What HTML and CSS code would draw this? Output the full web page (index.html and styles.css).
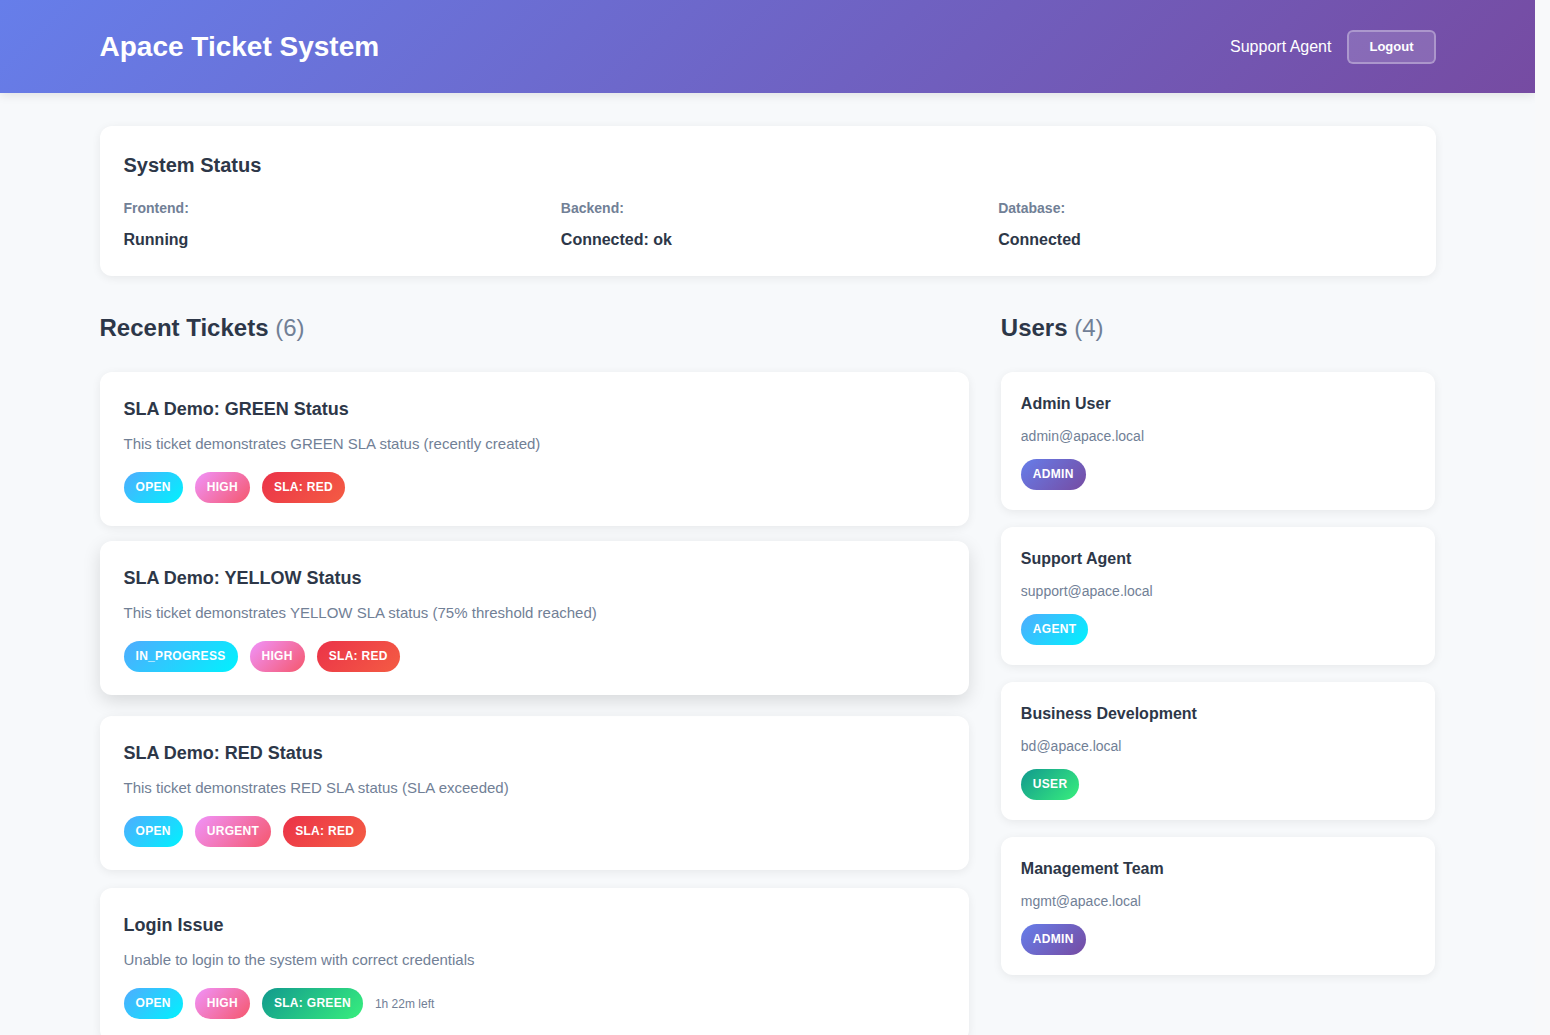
FILE: index.html
```html
<!DOCTYPE html>
<html lang="en">
<head>
<meta charset="utf-8">
<title>Apace Ticket System</title>
<link rel="stylesheet" href="styles.css">
</head>
<body>
<header class="topbar">
  <div class="topbar-inner">
    <h1 class="brand">Apace Ticket System</h1>
    <div class="user-area">
      <span class="current-user">Support Agent</span>
      <button class="logout-btn" type="button">Logout</button>
    </div>
  </div>
</header>

<main class="container">
  <section class="status-card">
    <h2 class="status-title">System Status</h2>
    <div class="status-grid">
      <div class="status-item">
        <div class="status-label">Frontend:</div>
        <div class="status-value">Running</div>
      </div>
      <div class="status-item">
        <div class="status-label">Backend:</div>
        <div class="status-value">Connected: ok</div>
      </div>
      <div class="status-item">
        <div class="status-label">Database:</div>
        <div class="status-value">Connected</div>
      </div>
    </div>
  </section>

  <div class="content-grid">
    <section class="tickets">
      <h2 class="section-title">Recent Tickets <span class="count">(6)</span></h2>

      <article class="ticket-card">
        <h3 class="ticket-title">SLA Demo: GREEN Status</h3>
        <p class="ticket-desc">This ticket demonstrates GREEN SLA status (recently created)</p>
        <div class="badges">
          <span class="badge badge-open">OPEN</span>
          <span class="badge badge-priority">HIGH</span>
          <span class="badge badge-sla-red">SLA: RED</span>
        </div>
      </article>

      <article class="ticket-card ticket-card-raised">
        <h3 class="ticket-title">SLA Demo: YELLOW Status</h3>
        <p class="ticket-desc">This ticket demonstrates YELLOW SLA status (75% threshold reached)</p>
        <div class="badges">
          <span class="badge badge-open">IN_PROGRESS</span>
          <span class="badge badge-priority">HIGH</span>
          <span class="badge badge-sla-red">SLA: RED</span>
        </div>
      </article>

      <article class="ticket-card">
        <h3 class="ticket-title">SLA Demo: RED Status</h3>
        <p class="ticket-desc">This ticket demonstrates RED SLA status (SLA exceeded)</p>
        <div class="badges">
          <span class="badge badge-open">OPEN</span>
          <span class="badge badge-priority">URGENT</span>
          <span class="badge badge-sla-red">SLA: RED</span>
        </div>
      </article>

      <article class="ticket-card">
        <h3 class="ticket-title">Login Issue</h3>
        <p class="ticket-desc">Unable to login to the system with correct credentials</p>
        <div class="badges">
          <span class="badge badge-open">OPEN</span>
          <span class="badge badge-priority">HIGH</span>
          <span class="badge badge-sla-green">SLA: GREEN</span>
          <span class="time-left">1h 22m left</span>
        </div>
      </article>

      <article class="ticket-card">
        <h3 class="ticket-title">Password Reset Request</h3>
        <p class="ticket-desc">User requests a password reset for their account</p>
        <div class="badges">
          <span class="badge badge-open">OPEN</span>
          <span class="badge badge-priority">MEDIUM</span>
          <span class="badge badge-sla-green">SLA: GREEN</span>
          <span class="time-left">3h 10m left</span>
        </div>
      </article>

      <article class="ticket-card">
        <h3 class="ticket-title">Report Export Failing</h3>
        <p class="ticket-desc">Exporting monthly reports to PDF returns an error</p>
        <div class="badges">
          <span class="badge badge-open">OPEN</span>
          <span class="badge badge-priority">LOW</span>
          <span class="badge badge-sla-green">SLA: GREEN</span>
          <span class="time-left">6h 45m left</span>
        </div>
      </article>
    </section>

    <aside class="users">
      <h2 class="section-title">Users <span class="count">(4)</span></h2>

      <div class="user-card">
        <h3 class="user-name">Admin User</h3>
        <p class="user-email">admin@apace.local</p>
        <span class="badge badge-admin">ADMIN</span>
      </div>

      <div class="user-card">
        <h3 class="user-name">Support Agent</h3>
        <p class="user-email">support@apace.local</p>
        <span class="badge badge-open">AGENT</span>
      </div>

      <div class="user-card">
        <h3 class="user-name">Business Development</h3>
        <p class="user-email">bd@apace.local</p>
        <span class="badge badge-sla-green">USER</span>
      </div>

      <div class="user-card">
        <h3 class="user-name">Management Team</h3>
        <p class="user-email">mgmt@apace.local</p>
        <span class="badge badge-admin">ADMIN</span>
      </div>
    </aside>
  </div>
</main>
</body>
</html>
```

FILE: styles.css
```css
* {
  box-sizing: border-box;
}

html, body {
  margin: 0;
  padding: 0;
}

html {
  background: #f8f9fa;
}

body {
  font-family: "Liberation Sans", Arial, Helvetica, sans-serif;
  background: #f7f9fb;
  color: #2d3748;
  margin-right: 15px;
}

/* Header */
.topbar {
  background: linear-gradient(135deg, #667eea 0%, #764ba2 100%);
  box-shadow: 0 2px 10px rgba(0, 0, 0, 0.1);
  color: #ffffff;
}

.topbar-inner {
  max-width: 1400px;
  margin: 0 auto;
  padding: 28px 32px;
  display: flex;
  align-items: center;
  justify-content: space-between;
}

.brand {
  margin: 0;
  font-size: 28px;
  line-height: 37px;
  font-weight: 700;
}

.user-area {
  display: flex;
  align-items: center;
  gap: 16px;
}

.current-user {
  font-size: 16px;
}

.logout-btn {
  font-family: inherit;
  font-size: 13px;
  font-weight: 700;
  color: #ffffff;
  background: rgba(255, 255, 255, 0.15);
  border: 2px solid rgba(255, 255, 255, 0.3);
  border-radius: 6px;
  padding: 0 20px;
  height: 34px;
  line-height: 30px;
  cursor: pointer;
}

/* Container */
.container {
  max-width: 1400px;
  margin: 0 auto;
  padding: 33px 32px 32px;
}

/* Status card */
.status-card {
  background: #ffffff;
  border-radius: 12px;
  box-shadow: 0 2px 10px rgba(0, 0, 0, 0.07);
  padding: 24px;
  margin-bottom: 32px;
}

.status-title {
  margin: 0 0 18px;
  font-size: 20px;
  line-height: 30px;
  font-weight: 700;
  color: #2d3748;
}

.status-grid {
  display: grid;
  grid-template-columns: repeat(3, 1fr);
  gap: 24px;
}

.status-label {
  font-size: 14px;
  line-height: 21px;
  font-weight: 700;
  color: #718096;
  margin-bottom: 9px;
}

.status-value {
  font-size: 16px;
  line-height: 24px;
  font-weight: 700;
  color: #2d3748;
}

/* Content grid */
.content-grid {
  display: grid;
  grid-template-columns: 2fr 1fr;
  gap: 32px;
  align-items: start;
}

.section-title {
  margin: 0 0 24px;
  font-size: 24px;
  line-height: 40px;
  font-weight: 700;
  color: #2d3748;
}

.count {
  font-weight: 400;
  color: #718096;
}

/* Tickets */
.ticket-card {
  background: #ffffff;
  border-radius: 12px;
  box-shadow: 0 2px 10px rgba(0, 0, 0, 0.07);
  padding: 25px 24px 23px;
  margin-bottom: 18px;
}

.ticket-card-raised {
  transform: translateY(-3px);
  box-shadow: 0 6px 18px rgba(0, 0, 0, 0.13);
}

.ticket-title {
  margin: 0;
  font-size: 18px;
  line-height: 24px;
  font-weight: 700;
  color: #2d3748;
}

.ticket-desc {
  margin: 12px 0 17px;
  font-size: 15px;
  line-height: 22px;
  color: #718096;
}

.badges {
  display: flex;
  align-items: center;
  gap: 12px;
}

.badge {
  display: inline-block;
  font-size: 12px;
  line-height: 15px;
  font-weight: 700;
  letter-spacing: 0.3px;
  color: #ffffff;
  padding: 8px 12px;
  border-radius: 999px;
}

.badge-open {
  background: linear-gradient(135deg, #4facfe 0%, #00f2fe 100%);
}

.badge-priority {
  background: linear-gradient(135deg, #f093fb 0%, #f5576c 100%);
}

.badge-sla-red {
  background: linear-gradient(135deg, #eb3349 0%, #f45c43 100%);
}

.badge-sla-green {
  background: linear-gradient(135deg, #11998e 0%, #38ef7d 100%);
}

.badge-admin {
  background: linear-gradient(135deg, #667eea 0%, #764ba2 100%);
}

.time-left {
  font-size: 12px;
  color: #718096;
}

/* Users */
.user-card {
  background: #ffffff;
  border-radius: 12px;
  box-shadow: 0 2px 10px rgba(0, 0, 0, 0.07);
  padding: 21px 20px 20px;
  margin-bottom: 17px;
}

.user-name {
  margin: 0;
  font-size: 16px;
  line-height: 22px;
  font-weight: 700;
  color: #2d3748;
}

.user-email {
  margin: 10px 0 12px;
  font-size: 14px;
  line-height: 22px;
  color: #718096;
}
```
